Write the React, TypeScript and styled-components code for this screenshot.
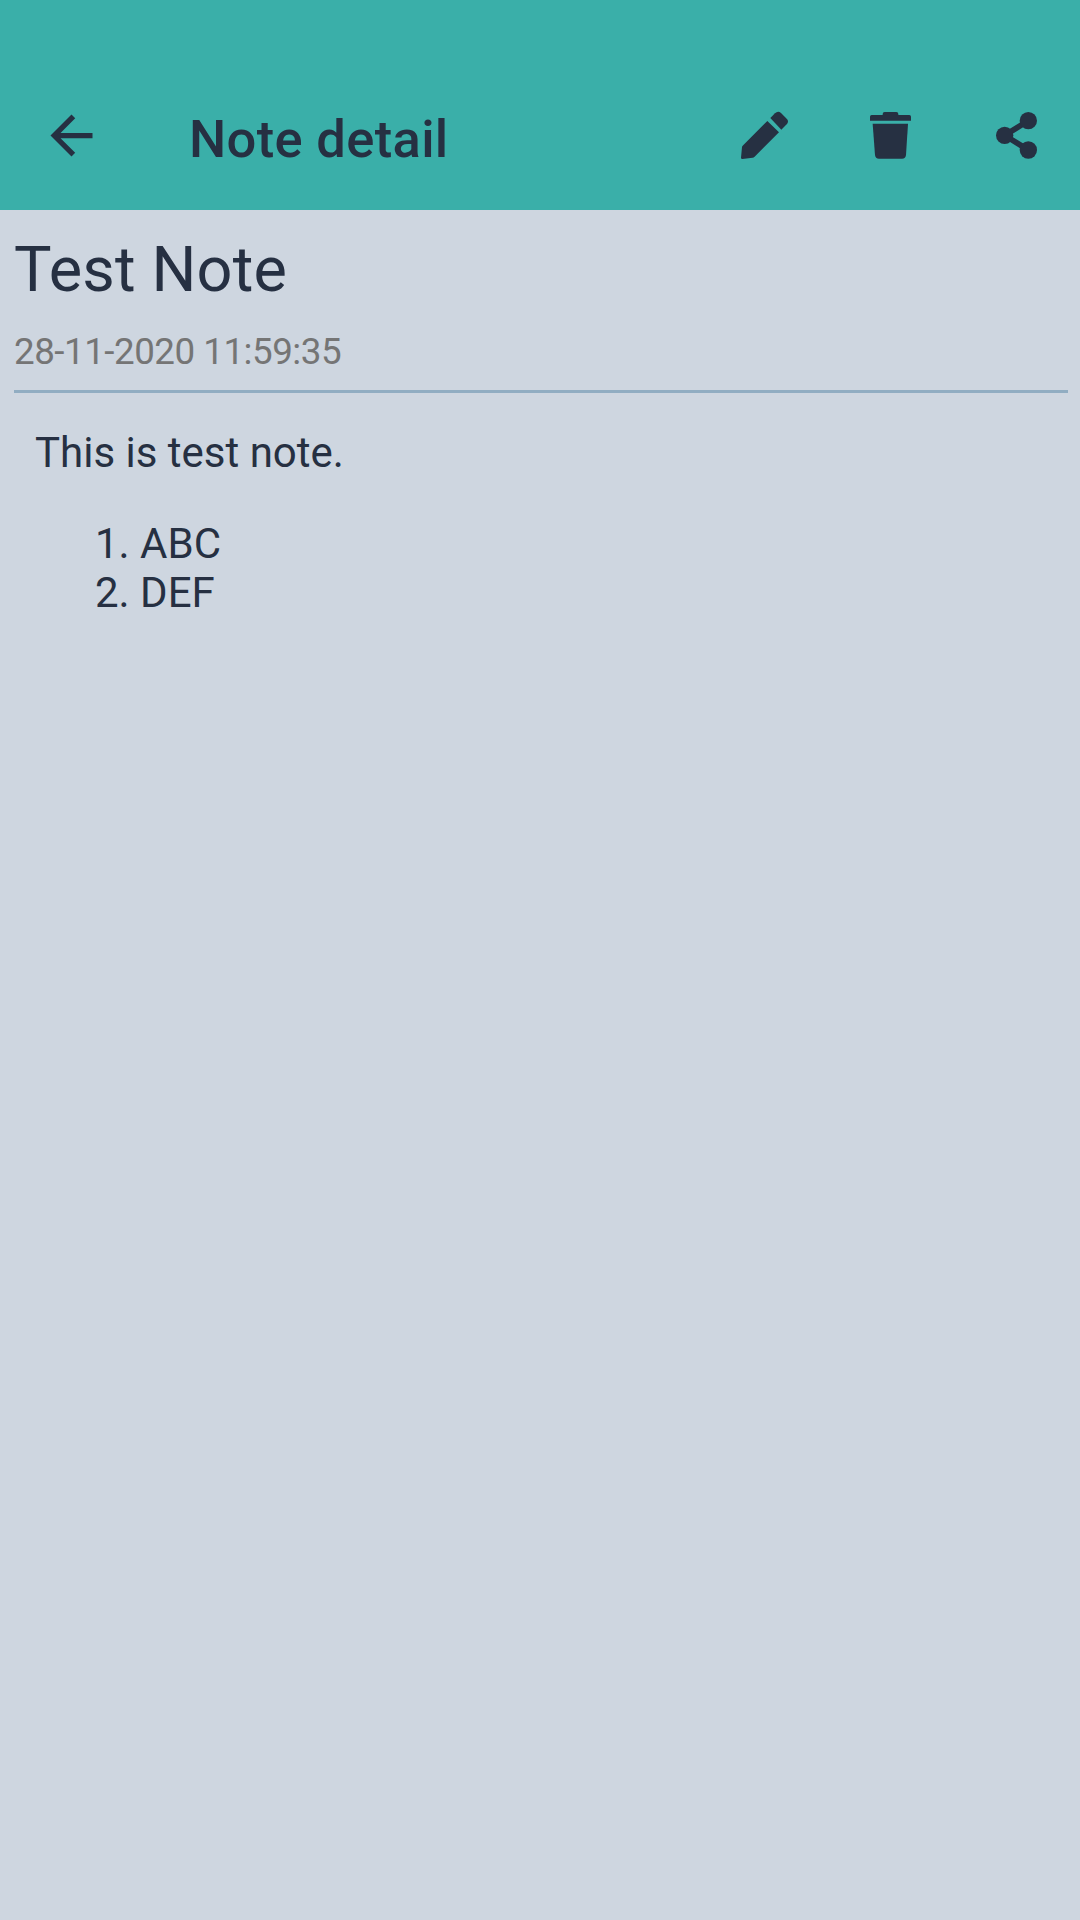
import React from "react";
import styled, { createGlobalStyle } from "styled-components";

const INK = "#263042";

const GlobalStyle = createGlobalStyle`
  body {
    margin: 0;
    background: #ced6e0;
  }
`;

const Screen = styled.main`
  box-sizing: border-box;
  display: flex;
  flex-direction: column;
  width: 1080px;
  height: 1920px;
  background: #ced6e0;
  color: ${INK};
  font-family: Roboto, "Noto Sans", sans-serif;
`;

const Toolbar = styled.header`
  box-sizing: border-box;
  display: flex;
  align-items: flex-start;
  height: 210px;
  padding: 90px 0 0 40px;
  background: #3aafa9;
`;

const Heading = styled.h1`
  flex: 1;
  margin: 18px 0 0 86px;
  font-size: 52.5px;
  line-height: 62px;
  font-weight: 500;
  letter-spacing: 0.33px;
`;

const IconButton = styled.button<{ $width: number; $top?: number }>`
  display: flex;
  flex: none;
  width: ${(p) => p.$width}px;
  padding: ${(p) => p.$top ?? 0}px 0 0;
  border: 0;
  background: none;
  color: inherit;
`;

const Glyph = styled.svg`
  display: block;
  fill: currentColor;
`;

const Note = styled.article`
  display: flex;
  flex-direction: column;
  padding: 21px 12px 0 14px;
`;

const Title = styled.h2`
  margin: 0;
  padding-top: 2px;
  font-size: 63px;
  line-height: 74px;
  font-weight: 400;
  letter-spacing: 0.15px;
`;

const Timestamp = styled.time`
  padding: 23px 0 16px;
  font-size: 36.75px;
  line-height: 44px;
  letter-spacing: -0.49px;
  color: #757575;
`;

const Divider = styled.hr`
  width: 100%;
  height: 3px;
  margin: 0;
  border: 0;
  background: #91adc2;
`;

const Body = styled.section`
  padding: 35px 21px 0;
  font-size: 42px;
  line-height: 49px;
`;

const Paragraph = styled.p`
  margin: 0 0 42px;
`;

const List = styled.ol`
  margin: 0;
  padding: 0 0 0 60px;
  list-style: none;
`;

const Item = styled.li`
  display: flex;
  gap: 10.4px;
`;

export default function App() {
  return (
    <>
      <GlobalStyle />
      <Screen>
        <Toolbar>
          <IconButton $width={63} $top={14} aria-label="Back">
            <Glyph width="63" height="63" viewBox="0 0 24 24">
              <path d="M20 11H7.83l5.59-5.59L12 4l-8 8 8 8 1.41-1.41L7.83 13H20v-2z" />
            </Glyph>
          </IconButton>
          <Heading>Note detail</Heading>
          <IconButton $width={130} aria-label="Edit">
            <Glyph width="100" height="90" viewBox="0 0 300 270">
              <path d="M142 93L177 127L103 201Q101 203 98 203L67 207Q63 207 63 203L66 171Q66 169 68 167Z" />
              <path d="M151 84L165 70Q174 61 183 69L200 86Q208 94 200 103L184 119Z" />
            </Glyph>
          </IconButton>
          <IconButton $width={130} aria-label="Delete">
            <Glyph width="90" height="90" viewBox="0 0 270 270">
              <path d="M98 75V72Q98 66 104 66H139Q145 66 145 72V75H178Q183 75 183 80V92H60V80Q60 75 65 75Z" />
              <path d="M68 101H174L168 195Q167 206 156 206H87Q76 206 75 195Z" />
            </Glyph>
          </IconButton>
          <IconButton $width={100} aria-label="Share">
            <Glyph width="100" height="90" viewBox="0 0 300 270">
              <path d="M145 92L74 136L145 180" fill="none" stroke="currentColor" strokeWidth="17" />
              <circle cx="145" cy="92" r="26" />
              <circle cx="74" cy="136" r="26" />
              <circle cx="145" cy="180" r="26" />
            </Glyph>
          </IconButton>
        </Toolbar>
        <Note>
          <Title>Test Note</Title>
          <Timestamp>28-11-2020 11:59:35</Timestamp>
          <Divider />
          <Body>
            <Paragraph>This is test note.</Paragraph>
            <List>
              <Item>
                <span>1.</span>
                <span>ABC</span>
              </Item>
              <Item>
                <span>2.</span>
                <span>DEF</span>
              </Item>
            </List>
          </Body>
        </Note>
      </Screen>
    </>
  );
}
